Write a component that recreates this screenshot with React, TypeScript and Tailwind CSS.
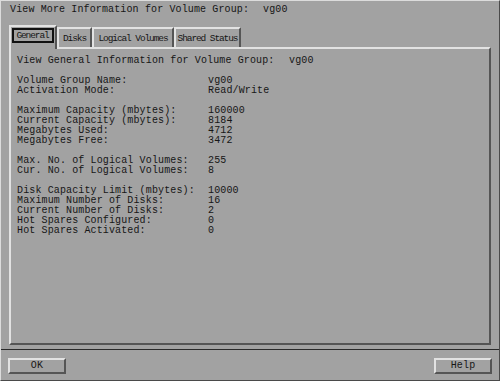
import React from "react";

const rows: ([string, string] | null)[] = [
  ["Volume Group Name:", "vg00"],
  ["Activation Mode:", "Read/Write"],
  null,
  ["Maximum Capacity (mbytes):", "160000"],
  ["Current Capacity (mbytes):", "8184"],
  ["Megabytes Used:", "4712"],
  ["Megabytes Free:", "3472"],
  null,
  ["Max. No. of Logical Volumes:", "255"],
  ["Cur. No. of Logical Volumes:", "8"],
  null,
  ["Disk Capacity Limit (mbytes):", "10000"],
  ["Maximum Number of Disks:", "16"],
  ["Current Number of Disks:", "2"],
  ["Hot Spares Configured:", "0"],
  ["Hot Spares Activated:", "0"],
];

export default function App() {
  return (
    <div
      className="w-[500px] h-[381px] bg-[#a2a2a2] border border-t-[#dcdcdc] border-l-[#dcdcdc] border-r-[#4a4a4a] border-b-[#4a4a4a] flex flex-col text-[#161616] text-[10px] leading-[10px] tracking-[0.13px] overflow-hidden"
      style={{ fontFamily: '"Liberation Mono", "DejaVu Sans Mono", monospace' }}
    >
      {/* title */}
      <div className="flex pt-[4px] pl-[9px] whitespace-pre">
        <span className="w-[253px]">View More Information for Volume Group:</span>
        <span>vg00</span>
      </div>

      {/* tabs */}
      <div className="relative z-10 mt-[10px] ml-[8px] h-[22px] flex items-end text-[9.5px] tracking-[-1.1px] leading-[11px] whitespace-pre">
        <div className="w-[48px] h-[24px] -mb-[2px] bg-[#a2a2a2] border-t-2 border-l-2 border-r-2 border-t-[#e2e2e2] border-l-[#e2e2e2] border-r-[#555555] flex items-start justify-center pt-[1px]">
          <span className="border-2 border-[#111111] px-[2px] pr-[3px] leading-[11px]">General</span>
        </div>
        <div className="w-[35px] h-[20px] border-t-2 border-l-2 border-r-2 border-t-[#e2e2e2] border-l-[#e2e2e2] border-r-[#555555] flex items-center justify-center">
          Disks
        </div>
        <div className="w-[82px] h-[20px] border-t-2 border-l-2 border-r-2 border-t-[#e2e2e2] border-l-[#e2e2e2] border-r-[#555555] flex items-center justify-center">
          Logical Volumes
        </div>
        <div className="w-[67px] h-[20px] border-t-2 border-l-2 border-r-2 border-t-[#e2e2e2] border-l-[#e2e2e2] border-r-[#555555] flex items-center justify-center">
          Shared Status
        </div>
      </div>

      {/* panel */}
      <div className="ml-[8px] w-[482px] h-[298px] border-2 border-t-[#e2e2e2] border-l-[#e2e2e2] border-r-[#555555] border-b-[#555555] pt-[7px] pl-[6px] whitespace-pre">
        <div className="flex">
          <span className="w-[272px]">View General Information for Volume Group:</span>
          <span>vg00</span>
        </div>
        <div className="h-[10px]" />
        {rows.map((r, i) =>
          r ? (
            <div key={i} className="flex">
              <span className="w-[191px]">{r[0]}</span>
              <span>{r[1]}</span>
            </div>
          ) : (
            <div key={i} className="h-[10px]" />
          )
        )}
      </div>

      {/* separator */}
      <div className="mt-[4px] h-[1px] bg-[#2a2a2a]" />

      {/* buttons */}
      <div className="mt-[8px] px-[7px] flex justify-between">
        <button className="w-[58px] h-[16px] border-2 border-t-[#e2e2e2] border-l-[#e2e2e2] border-r-[#555555] border-b-[#555555] flex items-center justify-center text-[10px] leading-[10px]">
          OK
        </button>
        <button className="w-[58px] h-[16px] border-2 border-t-[#e2e2e2] border-l-[#e2e2e2] border-r-[#555555] border-b-[#555555] flex items-center justify-center text-[10px] leading-[10px]">
          Help
        </button>
      </div>
    </div>
  );
}
